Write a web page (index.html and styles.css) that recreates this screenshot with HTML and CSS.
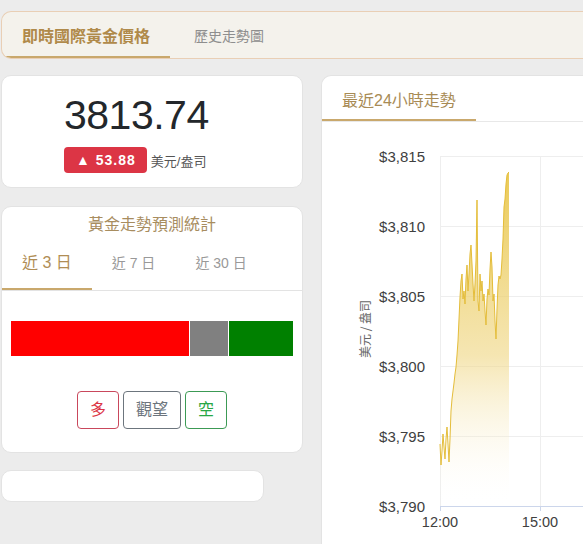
FILE: index.html
```html
<!DOCTYPE html>
<html lang="zh-Hant">
<head>
<meta charset="utf-8">
<title>即時國際黃金價格</title>
<link rel="stylesheet" href="styles.css">
</head>
<body>
<div class="page">
  <div class="topbar">
    <div class="top-tab active">即時國際黃金價格</div>
    <div class="top-tab">歷史走勢圖</div>
  </div>

  <div class="main">
    <div class="left-col">
      <div class="card price-card">
        <div class="price-value">3813.74</div>
        <div class="price-row">
          <span class="badge-up">▲ 53.88</span>
          <span class="unit">美元/盎司</span>
        </div>
      </div>

      <div class="card pred-card">
        <div class="pred-title">黃金走勢預測統計</div>
        <div class="pred-tabs">
          <div class="pred-tab active">近 3 日</div>
          <div class="pred-tab">近 7 日</div>
          <div class="pred-tab">近 30 日</div>
        </div>
        <div class="ratio-bar">
          <div class="seg seg-long" style="width:178px"></div>
          <div class="seg seg-wait" style="width:38px"></div>
          <div class="seg seg-short" style="width:64px"></div>
        </div>
        <div class="btn-row">
          <button class="btn btn-long">多</button>
          <button class="btn btn-wait">觀望</button>
          <button class="btn btn-short">空</button>
        </div>
      </div>

      <div class="card empty-card"></div>
    </div>

    <div class="card chart-card">
      <div class="chart-head">
        <div class="chart-tab">最近24小時走勢</div>
      </div>
      <svg class="chart" width="420" height="430" viewBox="322 123 420 430" xmlns="http://www.w3.org/2000/svg">
        <defs>
          <linearGradient id="gfill" gradientUnits="userSpaceOnUse" x1="0" y1="173" x2="0" y2="507">
            <stop offset="0" stop-color="#e8c443" stop-opacity="0.9"/>
            <stop offset="0.55" stop-color="#efd57f" stop-opacity="0.6"/>
            <stop offset="1" stop-color="#ffffff" stop-opacity="0"/>
          </linearGradient>
        </defs>
        <g class="grid">
          <line x1="440" y1="157.5" x2="742" y2="157.5"/>
          <line x1="440" y1="227.5" x2="742" y2="227.5"/>
          <line x1="440" y1="297.5" x2="742" y2="297.5"/>
          <line x1="440" y1="367.5" x2="742" y2="367.5"/>
          <line x1="440" y1="437.5" x2="742" y2="437.5"/>
          <line x1="440.5" y1="157" x2="440.5" y2="507"/>
          <line x1="540.5" y1="157" x2="540.5" y2="507"/>
          <line x1="640.5" y1="157" x2="640.5" y2="507"/>
        </g>
        <g class="axis">
          <line x1="440" y1="507.5" x2="742" y2="507.5"/>
          <line x1="440.5" y1="507" x2="440.5" y2="512"/>
          <line x1="540.5" y1="507" x2="540.5" y2="512"/>
        </g>
        <path class="area" d="M440,445 L441,466 L442,452 L443,435 L444,448 L445,460 L446,440 L447,428 L448,445 L449,463 L450,440 L451,412 L452,400 L453,392 L454,384 L455,375 L456,368 L457,356 L458,342 L459,320 L460,298 L461,282 L462,275 L463,300 L464,292 L465,305 L466,280 L467,266 L468,292 L469,275 L470,255 L471,246 L472,265 L473,285 L474,302 L475,285 L476,262 L477,201 L478,302 L479,312 L480,275 L481,292 L482,282 L483,302 L484,295 L485,312 L486,326 L487,300 L488,290 L489,296 L490,270 L491,253 L492,268 L493,302 L494,295 L495,322 L496,340 L497,310 L498,286 L499,277 L500,280 L501,276 L502,260 L503,240 L504,208 L505,200 L506,185 L507,176 L508,174 L509,173 L509,507 L440,507 Z"/>
        <polyline class="line" points="440,445 441,466 442,452 443,435 444,448 445,460 446,440 447,428 448,445 449,463 450,440 451,412 452,400 453,392 454,384 455,375 456,368 457,356 458,342 459,320 460,298 461,282 462,275 463,300 464,292 465,305 466,280 467,266 468,292 469,275 470,255 471,246 472,265 473,285 474,302 475,285 476,262 477,201 478,302 479,312 480,275 481,292 482,282 483,302 484,295 485,312 486,326 487,300 488,290 489,296 490,270 491,253 492,268 493,302 494,295 495,322 496,340 497,310 498,286 499,277 500,280 501,276 502,260 503,240 504,208 505,200 506,185 507,176 508,174 509,173"/>
        <g class="ylabels">
          <text x="425" y="162.5">$3,815</text>
          <text x="425" y="232.5">$3,810</text>
          <text x="425" y="302.5">$3,805</text>
          <text x="425" y="372.5">$3,800</text>
          <text x="425" y="442.5">$3,795</text>
          <text x="425" y="512.5">$3,790</text>
        </g>
        <g class="xlabels">
          <text x="440" y="527.5">12:00</text>
          <text x="540" y="527.5">15:00</text>
        </g>
        <text class="ytitle" transform="translate(370 330) rotate(-90)">美元 / 盎司</text>
      </svg>
    </div>
  </div>
</div>
</body>
</html>
```

FILE: styles.css
```css
html, body {
  margin: 0;
  padding: 0;
}

body {
  background: #ececec;
  font-family: "Liberation Sans", "Noto Sans CJK TC", sans-serif;
  color: #212529;
  overflow: hidden;
  width: 583px;
  height: 544px;
}

.page {
  width: 760px;
  padding: 11px 0 0 1px;
}

/* top tab bar */
.topbar {
  display: flex;
  height: 46px;
  background: #f4f2ec;
  border: 1px solid #e9cfb5;
  border-right: none;
  border-radius: 10px 0 0 10px;
  overflow: hidden;
}

.top-tab {
  display: flex;
  align-items: center;
  padding: 0 20px 0 24px;
  font-size: 14px;
  color: #8e8e8e;
}

.top-tab.active {
  padding: 0 20px;
  font-size: 16px;
  font-weight: bold;
  color: #b08a4a;
  box-shadow: inset 0 -2px 0 #c9a86c;
}

/* main layout */
.main {
  display: grid;
  grid-template-columns: 302px 420px;
  column-gap: 18px;
  margin-top: 16px;
  align-items: start;
}

.left-col {
  display: flex;
  flex-direction: column;
}

.card {
  background: #ffffff;
  border: 1px solid #e3e3e3;
  border-radius: 10px;
  box-sizing: border-box;
}

/* price card */
.price-card {
  height: 113px;
  padding: 19px 0 0 62px;
}

.price-value {
  font-size: 41px;
  line-height: 41px;
  letter-spacing: -0.5px;
  color: #23272b;
}

.price-row {
  display: flex;
  align-items: center;
  margin-top: 11px;
}

.badge-up {
  display: inline-block;
  height: 26px;
  line-height: 26px;
  padding: 0 11px 0 12px;
  background: #dc3545;
  color: #ffffff;
  font-weight: bold;
  font-size: 14px;
  letter-spacing: 1px;
  border-radius: 4px;
}

.unit {
  margin-left: 4px;
  font-size: 13px;
  color: #555555;
}

/* prediction card */
.pred-card {
  margin-top: 18px;
  padding-bottom: 23px;
}

.pred-title {
  text-align: center;
  font-size: 16px;
  line-height: 22px;
  padding-top: 7px;
  color: #a88d5f;
}

.pred-tabs {
  display: flex;
  margin-top: 6px;
  border-bottom: 1px solid #e3e3e3;
}

.pred-tab {
  padding: 10px 20px 16px;
  line-height: 22px;
  font-size: 14px;
  color: #999999;
}

.pred-tab.active {
  font-size: 16px;
  color: #b08d55;
  box-shadow: inset 0 -2px 0 #c9a86c;
}

.ratio-bar {
  display: flex;
  gap: 1px;
  height: 35px;
  margin: 30px 9px 0;
}

.seg {
  height: 100%;
}

.seg-long { background: #ff0000; }
.seg-wait { background: #808080; }
.seg-short { background: #008000; }

.btn-row {
  display: flex;
  justify-content: center;
  gap: 4px;
  margin-top: 35px;
}

.btn {
  height: 38px;
  padding: 0 12px;
  font-family: "Liberation Sans", "Noto Sans CJK TC", sans-serif;
  font-size: 16px;
  line-height: 36px;
  background: #ffffff;
  border: 1px solid;
  border-radius: 4px;
}

.btn-long { color: #dc3545; border-color: #c9485c; }
.btn-wait { color: #6c757d; border-color: #6c757d; }
.btn-short { color: #28a745; border-color: #3c9a55; }

.empty-card {
  margin-top: 17px;
  width: 263px;
  height: 32px;
}

/* chart card */
.chart-card {
  height: 600px;
  overflow: hidden;
  border-right: none;
  border-radius: 10px 0 0 10px;
}

.chart-head {
  display: flex;
  height: 45px;
  border-bottom: 1px solid #e8e8e8;
}

.chart-tab {
  display: flex;
  align-items: center;
  padding: 0 20px;
  font-size: 16px;
  color: #a88b55;
  box-shadow: inset 0 -2px 0 #c9a86c;
}

.chart {
  display: block;
}

.grid line {
  stroke: #eeeeee;
  stroke-width: 1;
}

.axis line {
  stroke: #ccd6eb;
  stroke-width: 1;
}

.area {
  fill: url(#gfill);
}

.line {
  fill: none;
  stroke: #e4bd3a;
  stroke-width: 1;
  stroke-linejoin: round;
}

.ylabels text {
  font-family: "Liberation Sans", sans-serif;
  font-size: 15px;
  fill: #404040;
  text-anchor: end;
}

.xlabels text {
  font-family: "Liberation Sans", sans-serif;
  font-size: 14.5px;
  fill: #404040;
  text-anchor: middle;
}

.ytitle {
  font-family: "Noto Sans CJK TC", sans-serif;
  font-size: 12px;
  fill: #666666;
  text-anchor: middle;
}
```
